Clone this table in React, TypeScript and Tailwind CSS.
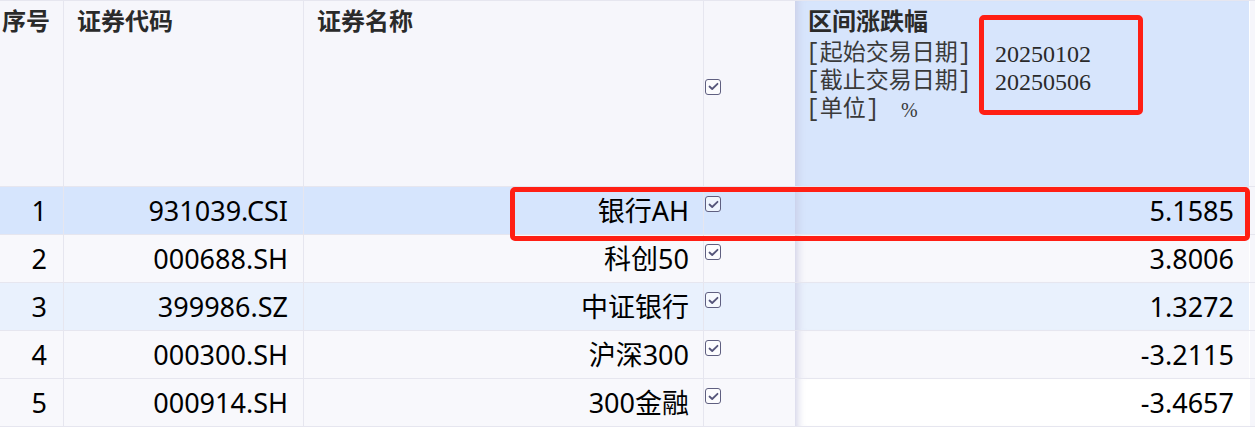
import { FC } from 'react';

type Row = {
    no: number;
    code: string;
    name: string;
    change: string;
    rowBg: string;
    valueBg: string;
};

const rows: Row[] = [
    { no: 1, code: '931039.CSI', name: '银行AH', change: '5.1585', rowBg: 'bg-[#d6e5fd]', valueBg: 'bg-[#d6e5fd]' },
    { no: 2, code: '000688.SH', name: '科创50', change: '3.8006', rowBg: 'bg-[#f8f8fc]', valueBg: 'bg-[#f8f8fc]' },
    { no: 3, code: '399986.SZ', name: '中证银行', change: '1.3272', rowBg: 'bg-[#e9f1fd]', valueBg: 'bg-[#e9f1fd]' },
    { no: 4, code: '000300.SH', name: '沪深300', change: '-3.2115', rowBg: 'bg-[#f8f8fc]', valueBg: 'bg-[#f8f8fc]' },
    { no: 5, code: '000914.SH', name: '300金融', change: '-3.4657', rowBg: 'bg-[#f8f8fc]', valueBg: 'bg-white' },
];

const CheckBox: FC = () => (
    <div className="w-[16px] h-[16px] rounded-[3px] border-[1.5px] border-[#5f5f80] bg-white/60 flex items-center justify-center">
        <svg width="11" height="9" viewBox="0 0 11 9" fill="none">
            <path d="M1.5 4.5 L4.2 7 L9.5 1.8" stroke="#55557a" strokeWidth="1.8" strokeLinecap="round" strokeLinejoin="round" />
        </svg>
    </div>
);

const sans = "font-['Noto_Sans','Noto_Sans_CJK_SC',sans-serif]";
const valueShadow = 'shadow-[inset_10px_0_8px_-8px_rgba(200,200,225,0.9)]';

const App: FC = () => {
    return (
        <div className="relative w-[1255px] h-[439px] bg-white overflow-hidden text-black">
            {/* Header */}
            <div className="flex h-[187px] border-t border-b border-[#e6e6ef] font-['Noto_Sans_CJK_SC',sans-serif]">
                <div className="w-[64px] shrink-0 bg-[#f6f6fb] border-r border-[#e6e6ef] pl-[2px] pt-[4px] text-[24px] font-bold text-[#2a2a2a] leading-[30px]">
                    序号
                </div>
                <div className="w-[240px] shrink-0 bg-[#f6f6fb] border-r border-[#e6e6ef] pl-[13px] pt-[4px] text-[24px] font-bold text-[#2a2a2a] leading-[30px]">
                    证券代码
                </div>
                <div className="w-[400px] shrink-0 bg-[#f6f6fb] border-r border-[#e6e6ef] pl-[13px] pt-[4px] text-[24px] font-bold text-[#2a2a2a] leading-[30px]">
                    证券名称
                </div>
                <div className="w-[91px] shrink-0 bg-[#f6f6fb] pl-[1px] flex items-center">
                    <div className="-mt-[14px]">
                        <CheckBox />
                    </div>
                </div>
                <div className={`w-[455px] shrink-0 bg-[#d7e5fc] border-r border-white pl-[13px] pt-[4px] ${valueShadow}`}>
                    <div className="text-[24px] font-bold text-[#2a2a2a] leading-[30px]">区间涨跌幅</div>
                    <div className="mt-[5px] flex flex-col text-[23px] leading-[28px] text-[#3a3a3a] font-['Liberation_Mono','Noto_Sans_CJK_SC',monospace]">
                        <div className="flex">
                            <span className="w-[189px] -ml-[2px]">[起始交易日期]</span>
                            <span className="font-['Liberation_Serif',serif] text-[24px] text-[#2a2a2a]">20250102</span>
                        </div>
                        <div className="flex">
                            <span className="w-[189px] -ml-[2px]">[截止交易日期]</span>
                            <span className="font-['Liberation_Serif',serif] text-[24px] text-[#2a2a2a]">20250506</span>
                        </div>
                        <div className="flex">
                            <span className="w-[95px] -ml-[2px]">[单位]</span>
                            <span className="font-['Liberation_Serif',serif] text-[20px]">%</span>
                        </div>
                    </div>
                </div>
                <div className="flex-1 bg-[#f6f6fb]" />
            </div>

            {/* Rows */}
            {rows.map((row) => (
                <div key={row.no} className={`flex h-[48px] border-b border-[#e6e6ef] ${sans} text-[27px] leading-[48px]`}>
                    <div className={`w-[64px] shrink-0 ${row.rowBg} border-r border-[#e6e6ef] text-right pr-[16px]`}>
                        {row.no}
                    </div>
                    <div className={`w-[240px] shrink-0 ${row.rowBg} border-r border-[#e6e6ef] text-right pr-[15px]`}>
                        {row.code}
                    </div>
                    <div className={`w-[400px] shrink-0 ${row.rowBg} border-r border-[#e6e6ef] text-right pr-[14px]`}>
                        {row.name}
                    </div>
                    <div className={`w-[91px] shrink-0 ${row.rowBg} pl-[1px] pt-[9px]`}>
                        <CheckBox />
                    </div>
                    <div className={`w-[455px] shrink-0 ${row.valueBg} border-r border-white text-right pr-[15px] ${valueShadow}`}>
                        {row.change}
                    </div>
                    <div className="flex-1 bg-[#f6f6fb]" />
                </div>
            ))}

            {/* Annotation boxes */}
            <div className="absolute left-[979px] top-[15px] w-[164px] h-[100px] border-[5px] border-[#ff1f14] rounded-[5px]" />
            <div className="absolute left-[510px] top-[187px] w-[740px] h-[54px] border-[5px] border-[#ff1f14] rounded-[5px]" />
        </div>
    );
};

export default App;
